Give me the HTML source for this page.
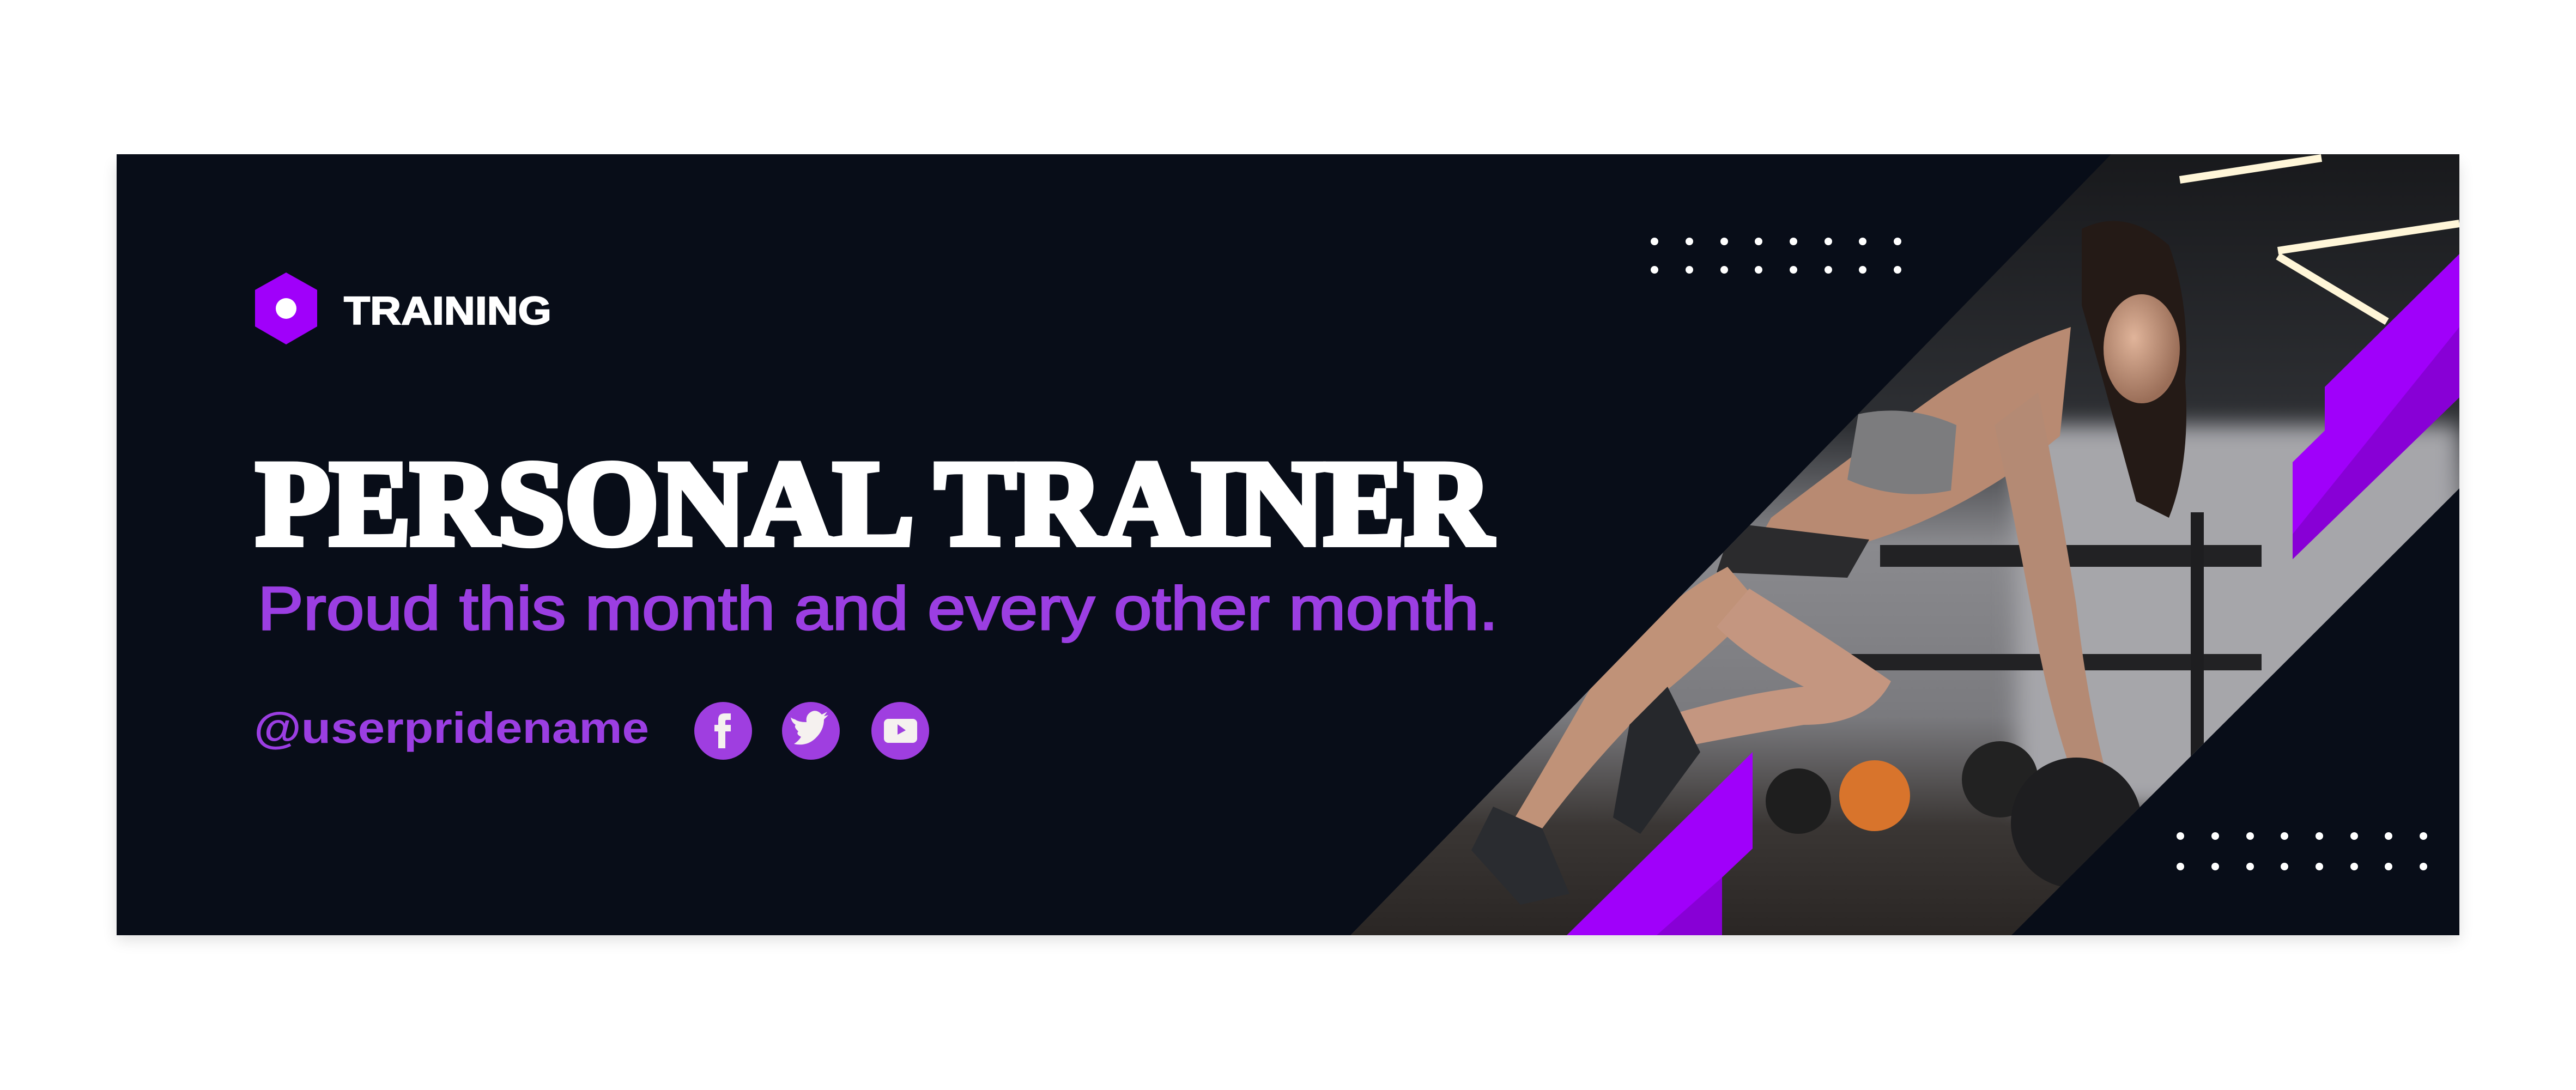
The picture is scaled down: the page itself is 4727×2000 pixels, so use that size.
<!DOCTYPE html>
<html><head><meta charset="utf-8"><style>
html,body{margin:0;padding:0;background:#fff;}
svg{display:block;}
</style></head><body>
<svg width="4727" height="2000" viewBox="0 0 4727 2000" xmlns="http://www.w3.org/2000/svg">
<defs>
<filter id="sh" x="-5%" y="-5%" width="110%" height="115%"><feGaussianBlur stdDeviation="14"/></filter>
<filter id="bl"><feGaussianBlur stdDeviation="20"/></filter>
<clipPath id="photo"><polygon points="3874,283 4513,283 4513,896 3691,1716 2478,1716"/></clipPath>
<linearGradient id="bg" x1="0" y1="0" x2="0" y2="1">
<stop offset="0" stop-color="#18191c"/><stop offset="0.35" stop-color="#2e3034"/><stop offset="0.5" stop-color="#8a8a8e"/><stop offset="0.72" stop-color="#7a7a7e"/><stop offset="0.86" stop-color="#3a3634"/><stop offset="1" stop-color="#2a2624"/>
</linearGradient>
<radialGradient id="skin" cx="0.4" cy="0.4" r="0.6"><stop offset="0" stop-color="#e0b49a"/><stop offset="1" stop-color="#9a6e58"/></radialGradient>
</defs>
<rect x="214" y="300" width="4299" height="1425" fill="#000" opacity="0.12" filter="url(#sh)"/>
<rect x="214" y="283" width="4299" height="1433" fill="#080d18"/>
<g clip-path="url(#photo)">
<rect x="2400" y="283" width="2200" height="1433" fill="url(#bg)"/>
<rect x="3700" y="780" width="813" height="700" fill="#a6a6aa" filter="url(#bl)"/>
<path d="M3250 760 L4000 760" stroke="#1a1a1c" stroke-width="0"/>
<path d="M4000 330 L4260 290 M4180 460 L4513 410 M4180 470 L4380 590" stroke="#fff6d8" stroke-width="14"/>
<rect x="3450" y="1000" width="700" height="40" fill="#222224"/>
<rect x="3350" y="1200" width="800" height="30" fill="#222224"/>
<rect x="4020" y="940" width="24" height="540" fill="#1e1e20"/>
<circle cx="3440" cy="1460" r="65" fill="#d8742c"/>
<circle cx="3670" cy="1430" r="70" fill="#222"/>
<circle cx="3300" cy="1470" r="60" fill="#1e1e1e"/>
<!-- woman -->
<path d="M3820 420 Q3900 380 3980 450 Q4020 560 4010 700 Q4020 850 3980 950 L3920 920 Q3860 700 3820 560 Z" fill="#241a16"/>
<ellipse cx="3930" cy="640" rx="70" ry="100" fill="url(#skin)"/>
<path d="M3800 600 Q3680 640 3560 720 Q3420 820 3250 950 L3200 1040 Q3380 1020 3520 960 Q3660 900 3780 800 Z" fill="#b88a72"/>
<path d="M3410 760 Q3500 740 3590 780 L3580 900 Q3480 920 3390 880 Z" fill="#7c7c7e"/>
<path d="M3180 960 L3430 990 L3390 1060 L3150 1050 Z" fill="#2b2b2d"/>
<path d="M3170 1040 Q3020 1120 2920 1260 Q2840 1400 2780 1500 L2830 1520 Q2920 1400 3030 1290 Q3130 1210 3230 1110 Z" fill="#c09278"/>
<path d="M3210 1080 Q3370 1180 3470 1250 Q3430 1330 3310 1330 Q3190 1350 3090 1370 L3070 1310 Q3210 1270 3310 1260 Q3210 1210 3150 1150 Z" fill="#c49680"/>
<path d="M3740 720 Q3780 920 3810 1110 Q3830 1290 3870 1440 L3820 1470 Q3760 1310 3730 1130 Q3690 920 3660 780 Z" fill="#b48a74"/>
<path d="M3060 1260 L2990 1330 L2960 1500 L3010 1530 L3120 1380 Z" fill="#26282c"/>
<path d="M2740 1480 L2700 1560 L2790 1660 L2880 1640 L2830 1520 Z" fill="#2a2c30"/>
<circle cx="3810" cy="1510" r="120" fill="#1e1e20"/>
</g>
<polygon points="4513,466 4513,729 4207,1026 4207,848 4266,790 4266,710" fill="#a000fa"/>
<polygon points="4513,600 4513,729 4207,1026 4207,980" fill="#8800d6"/>
<polygon points="3216,1380 3216,1557 3160,1610 3160,1716 2875,1716" fill="#a000fa"/>
<polygon points="3160,1610 3160,1716 3040,1716" fill="#8800d6"/>
<g fill="#fff">
<circle cx="3036" cy="443" r="7"/><circle cx="3100" cy="443" r="7"/><circle cx="3164" cy="443" r="7"/><circle cx="3227" cy="443" r="7"/><circle cx="3291" cy="443" r="7"/><circle cx="3355" cy="443" r="7"/><circle cx="3418" cy="443" r="7"/><circle cx="3482" cy="443" r="7"/>
<circle cx="3036" cy="495" r="7"/><circle cx="3100" cy="495" r="7"/><circle cx="3164" cy="495" r="7"/><circle cx="3227" cy="495" r="7"/><circle cx="3291" cy="495" r="7"/><circle cx="3355" cy="495" r="7"/><circle cx="3418" cy="495" r="7"/><circle cx="3482" cy="495" r="7"/>
<circle cx="4001" cy="1534" r="7"/><circle cx="4065" cy="1534" r="7"/><circle cx="4129" cy="1534" r="7"/><circle cx="4192" cy="1534" r="7"/><circle cx="4256" cy="1534" r="7"/><circle cx="4320" cy="1534" r="7"/><circle cx="4383" cy="1534" r="7"/><circle cx="4447" cy="1534" r="7"/>
<circle cx="4001" cy="1590" r="7"/><circle cx="4065" cy="1590" r="7"/><circle cx="4129" cy="1590" r="7"/><circle cx="4192" cy="1590" r="7"/><circle cx="4256" cy="1590" r="7"/><circle cx="4320" cy="1590" r="7"/><circle cx="4383" cy="1590" r="7"/><circle cx="4447" cy="1590" r="7"/>
</g>
<polygon points="525,500 582,532 582,599 525,632 468,599 468,532" fill="#a000fa"/>
<ellipse cx="525" cy="566" rx="19" ry="19" fill="#fff"/>
<text x="631" y="595" font-family="Liberation Sans, sans-serif" font-weight="bold" font-size="72" fill="#fff" stroke="#fff" stroke-width="2" textLength="381" lengthAdjust="spacingAndGlyphs">TRAINING</text>
<text x="470" y="998" font-family="Liberation Serif, serif" font-weight="bold" font-size="222" fill="#fff" textLength="2268" lengthAdjust="spacingAndGlyphs" stroke="#fff" stroke-width="12">PERSONAL TRAINER</text>
<text x="473" y="1155" font-family="Liberation Sans, sans-serif" font-size="112" fill="#9b3ee2" stroke="#9b3ee2" stroke-width="3" textLength="2276" lengthAdjust="spacingAndGlyphs">Proud this month and every other month.</text>
<text x="466" y="1363" font-family="Liberation Sans, sans-serif" font-weight="bold" font-size="80" fill="#9b3ee2" textLength="725" lengthAdjust="spacingAndGlyphs">@userpridename</text>
<circle cx="1327" cy="1341" r="53" fill="#9f3ee0"/>
<circle cx="1488" cy="1341" r="53" fill="#9f3ee0"/>
<circle cx="1652" cy="1341" r="53" fill="#9f3ee0"/>
<path d="M1318 1373 V1342 H1311 V1330 H1318 V1320 Q1318 1309 1330 1309 H1341 V1321 H1333 Q1331 1321 1331 1324 V1330 H1341 V1342 H1331 V1373 Z" fill="#f5f1ef"/>
<path d="M1457 1365 Q1480 1370 1496 1355 Q1512 1340 1512 1320 L1520 1312 L1512 1314 L1518 1306 L1508 1311 Q1498 1300 1487 1307 Q1478 1313 1480 1325 Q1465 1325 1459 1320 Q1451 1318 1451 1315 Q1452 1325 1460 1330 Q1456 1334 1465 1342 Q1460 1347 1470 1352 Q1465 1360 1457 1365 Z" fill="#f5f1ef"/>
<rect x="1622" y="1319" width="61" height="44" rx="8" fill="#f5f1ef"/>
<polygon points="1647,1329 1647,1348 1662,1340" fill="#9f3ee0"/>
</svg>
</body></html>
